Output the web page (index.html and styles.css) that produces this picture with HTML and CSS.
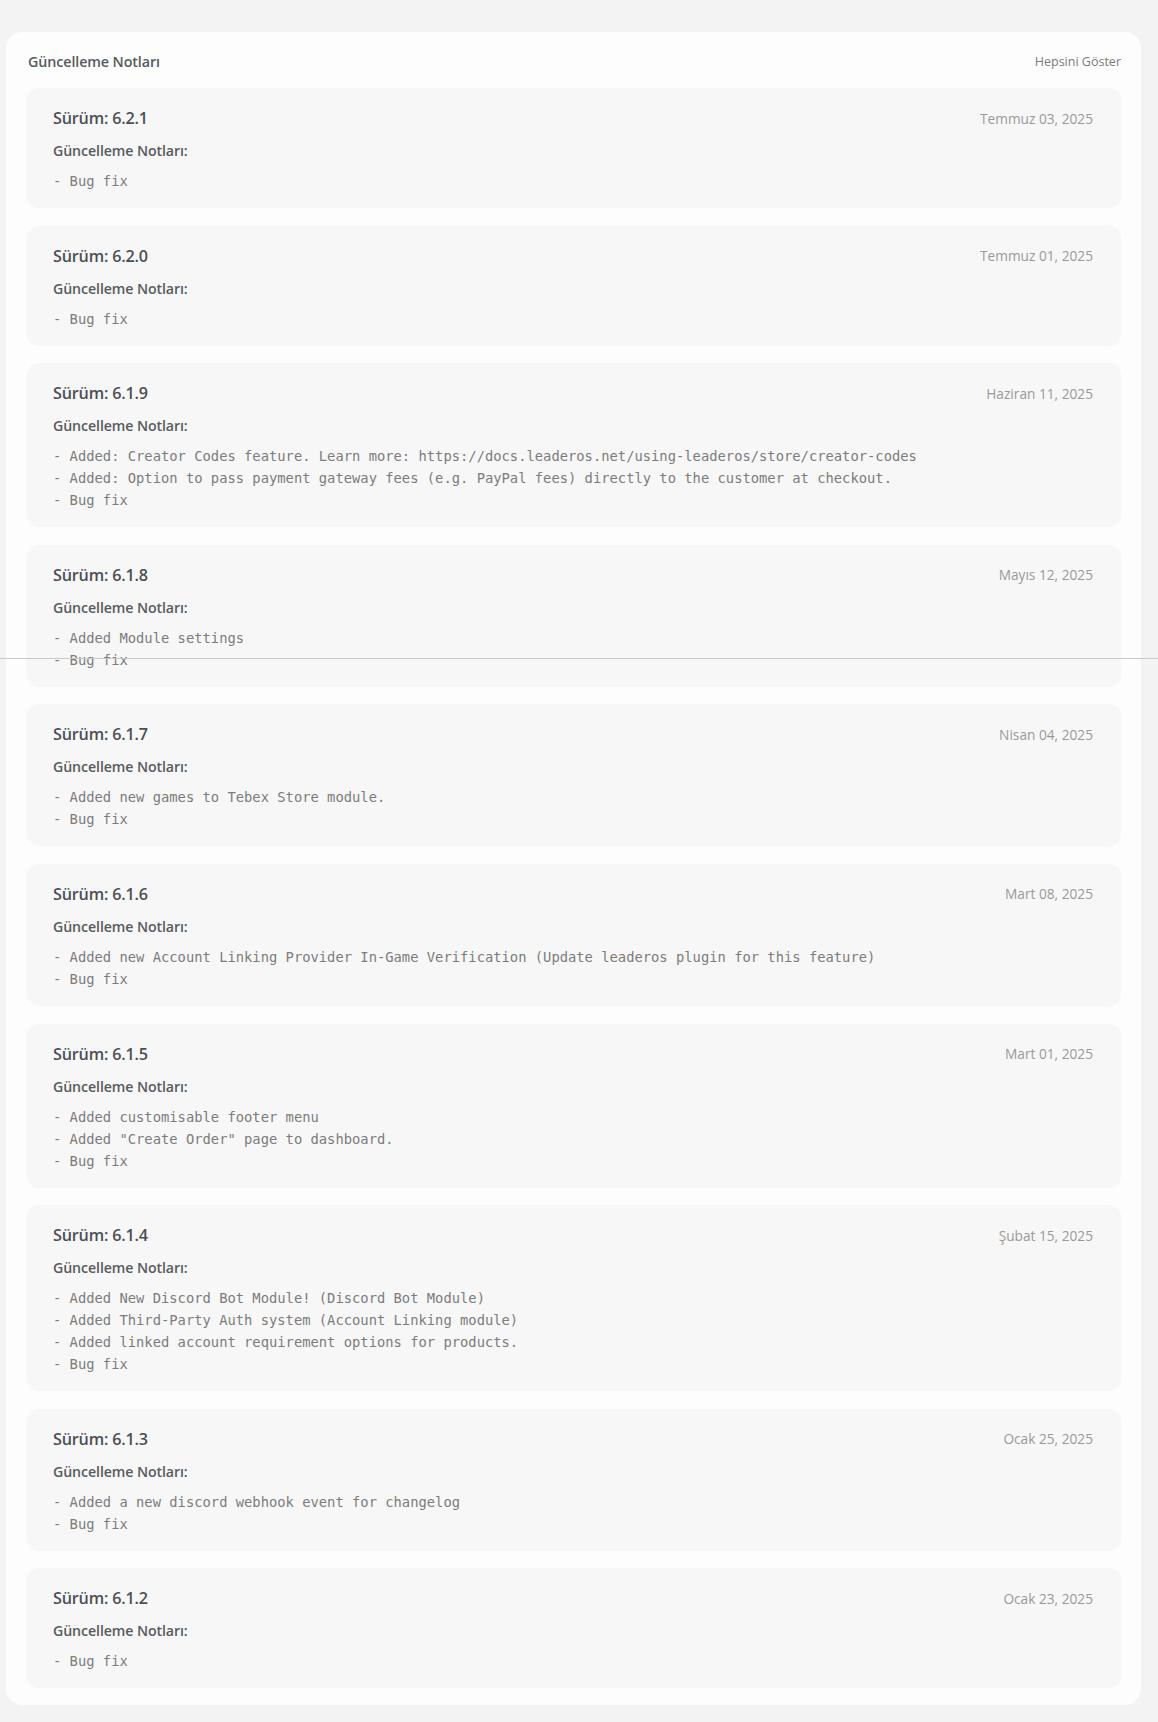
FILE: index.html
```html
<!DOCTYPE html>
<html lang="tr">
<head>
<meta charset="utf-8">
<title>Güncelleme Notları</title>
<link rel="stylesheet" href="styles.css">
</head>
<body>
<div class="page">
  <section class="card">
    <header class="card-head">
      <h2 class="card-title">Güncelleme Notları</h2>
      <a class="show-all" href="#">Hepsini Göster</a>
    </header>
    <div class="list">
      <article class="item">
        <div class="item-head"><h3 class="version">Sürüm: 6.2.1</h3><span class="date">Temmuz 03, 2025</span></div>
        <div class="notes-label">Güncelleme Notları:</div>
        <pre class="notes">- Bug fix</pre>
      </article>
      <article class="item">
        <div class="item-head"><h3 class="version">Sürüm: 6.2.0</h3><span class="date">Temmuz 01, 2025</span></div>
        <div class="notes-label">Güncelleme Notları:</div>
        <pre class="notes">- Bug fix</pre>
      </article>
      <article class="item">
        <div class="item-head"><h3 class="version">Sürüm: 6.1.9</h3><span class="date">Haziran 11, 2025</span></div>
        <div class="notes-label">Güncelleme Notları:</div>
        <pre class="notes">- Added: Creator Codes feature. Learn more: https://docs.leaderos.net/using-leaderos/store/creator-codes
- Added: Option to pass payment gateway fees (e.g. PayPal fees) directly to the customer at checkout.
- Bug fix</pre>
      </article>
      <article class="item">
        <div class="item-head"><h3 class="version">Sürüm: 6.1.8</h3><span class="date">Mayıs 12, 2025</span></div>
        <div class="notes-label">Güncelleme Notları:</div>
        <pre class="notes">- Added Module settings
- Bug fix</pre>
      </article>
      <article class="item">
        <div class="item-head"><h3 class="version">Sürüm: 6.1.7</h3><span class="date">Nisan 04, 2025</span></div>
        <div class="notes-label">Güncelleme Notları:</div>
        <pre class="notes">- Added new games to Tebex Store module.
- Bug fix</pre>
      </article>
      <article class="item">
        <div class="item-head"><h3 class="version">Sürüm: 6.1.6</h3><span class="date">Mart 08, 2025</span></div>
        <div class="notes-label">Güncelleme Notları:</div>
        <pre class="notes">- Added new Account Linking Provider In-Game Verification (Update leaderos plugin for this feature)
- Bug fix</pre>
      </article>
      <article class="item">
        <div class="item-head"><h3 class="version">Sürüm: 6.1.5</h3><span class="date">Mart 01, 2025</span></div>
        <div class="notes-label">Güncelleme Notları:</div>
        <pre class="notes">- Added customisable footer menu
- Added "Create Order" page to dashboard.
- Bug fix</pre>
      </article>
      <article class="item">
        <div class="item-head"><h3 class="version">Sürüm: 6.1.4</h3><span class="date">Şubat 15, 2025</span></div>
        <div class="notes-label">Güncelleme Notları:</div>
        <pre class="notes">- Added New Discord Bot Module! (Discord Bot Module)
- Added Third-Party Auth system (Account Linking module)
- Added linked account requirement options for products.
- Bug fix</pre>
      </article>
      <article class="item">
        <div class="item-head"><h3 class="version">Sürüm: 6.1.3</h3><span class="date">Ocak 25, 2025</span></div>
        <div class="notes-label">Güncelleme Notları:</div>
        <pre class="notes">- Added a new discord webhook event for changelog
- Bug fix</pre>
      </article>
      <article class="item">
        <div class="item-head"><h3 class="version">Sürüm: 6.1.2</h3><span class="date">Ocak 23, 2025</span></div>
        <div class="notes-label">Güncelleme Notları:</div>
        <pre class="notes">- Bug fix</pre>
      </article>
    </div>
  </section>
  <div class="seam"></div>
</div>
</body>
</html>
```

FILE: styles.css
```css
* { box-sizing: border-box; }

html, body {
  margin: 0;
  padding: 0;
  background: #f3f3f3;
}

body {
  font-family: "Open Sans", "Noto Sans", "Liberation Sans", sans-serif;
  color: #4a4a4a;
}

.page {
  position: relative;
  padding: 32px 17px 18px 6px;
}

.card {
  background: #fdfdfd;
  border-radius: 16px;
  padding: 19px 20px 17px 21px;
}

.card-head {
  display: flex;
  justify-content: space-between;
  align-items: center;
  height: 20px;
  margin-bottom: 17px;
}

.card-title {
  margin: 0 0 0 1px;
  font-size: 14.3px;
  font-weight: 600;
  color: #555a60;
  letter-spacing: -0.1px;
}

.show-all {
  font-size: 12.5px;
  color: #7a7a7a;
  text-decoration: none;
}

.list {
  display: flex;
  flex-direction: column;
  gap: 17.6px;
}

.item {
  background: #f7f7f7;
  border-radius: 12px;
  padding: 18px 28px 16px 26px;
  box-shadow: 0 0 3px rgba(0, 0, 0, 0.015);
}

.item-head {
  display: flex;
  justify-content: space-between;
  align-items: center;
  height: 24px;
}

.version {
  margin: 0;
  font-size: 16.2px;
  font-weight: 600;
  color: #4b4f55;
  letter-spacing: -0.2px;
}

.date {
  font-size: 13.7px;
  color: #9a9a9a;
}

.notes-label {
  margin-top: 11px;
  height: 20px;
  line-height: 20px;
  font-size: 14.2px;
  font-weight: 600;
  color: #575b60;
  letter-spacing: -0.1px;
}

.notes {
  margin: 9px 0 0 0;
  font-family: "DejaVu Sans Mono", "Liberation Mono", monospace;
  font-size: 13.8px;
  line-height: 22px;
  color: #7c7c7c;
  white-space: pre;
}

.seam {
  position: absolute;
  left: 0;
  right: 0;
  top: 658px;
  height: 1px;
  background: #c9c9c9;
}
```
